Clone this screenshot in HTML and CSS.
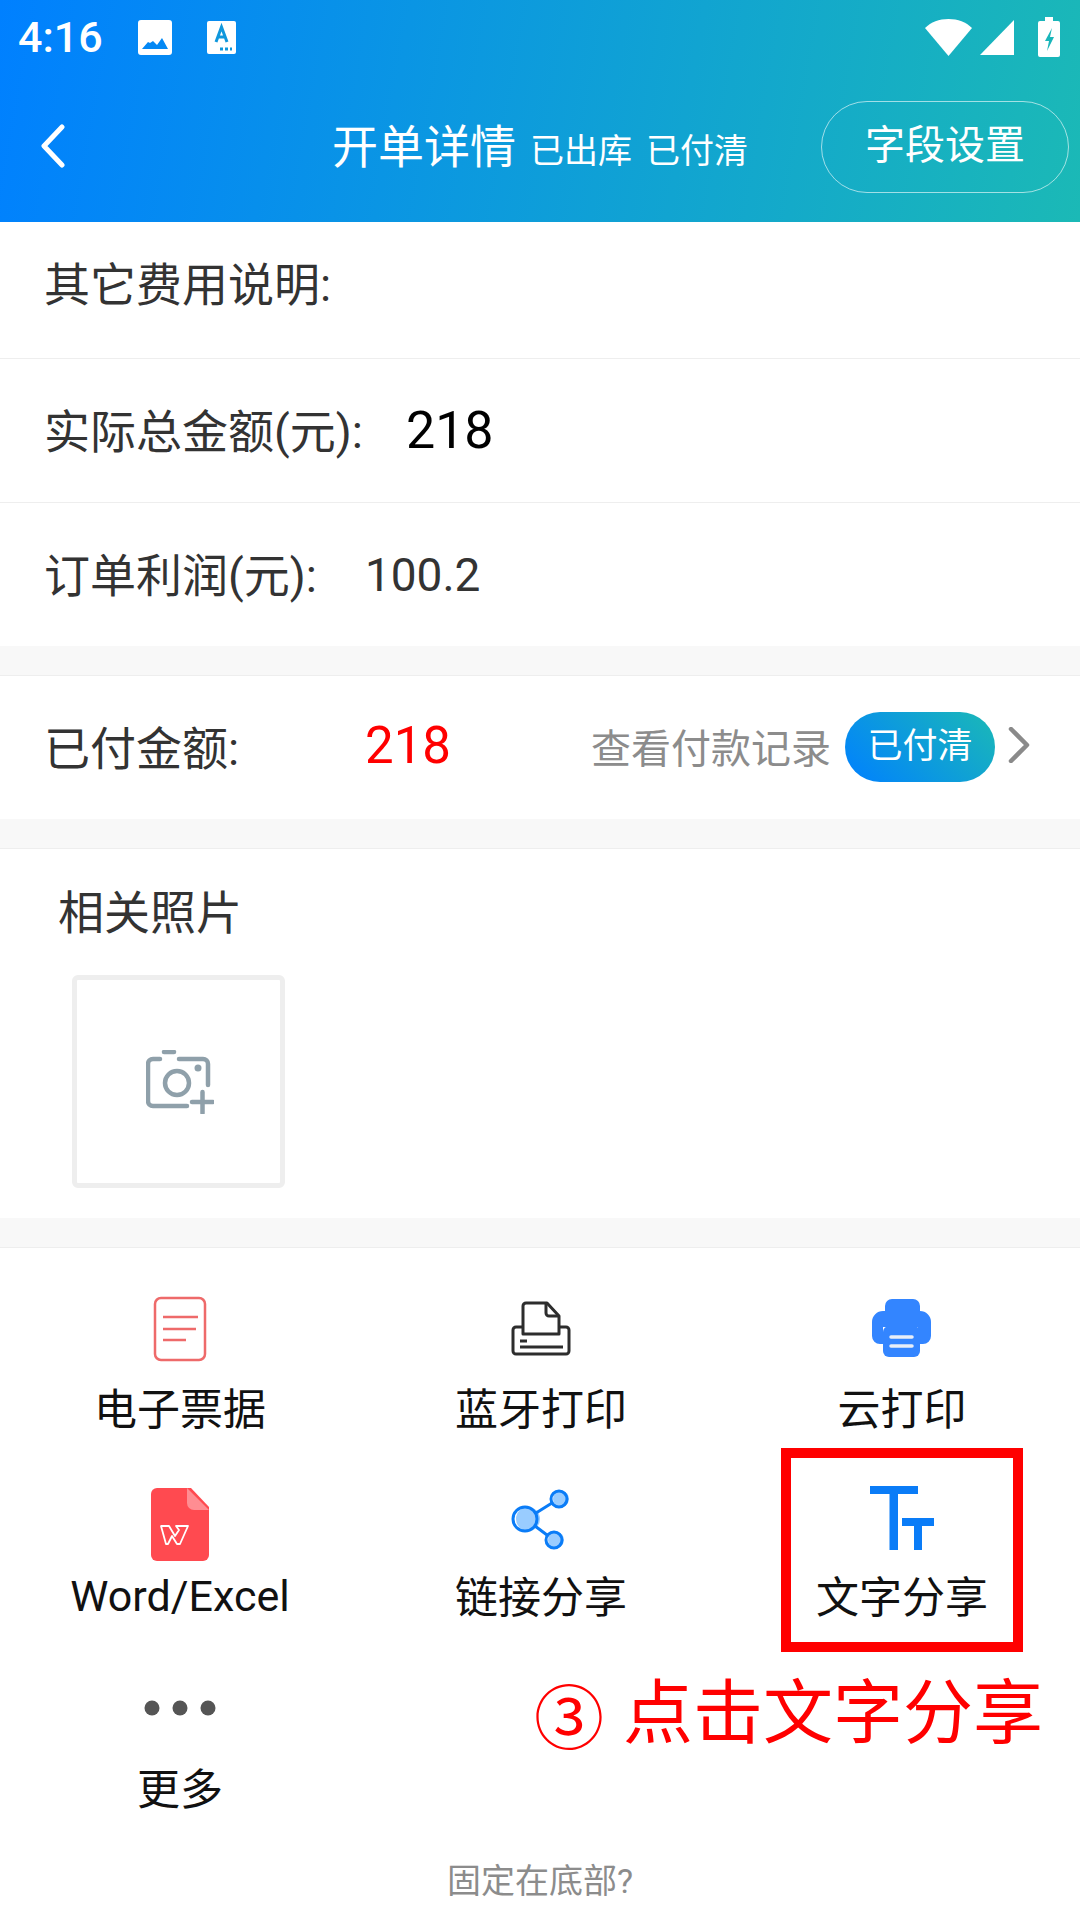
FILE: index.html
```html
<!DOCTYPE html>
<html lang="zh">
<head>
  <meta charset="UTF-8">
  <meta name="viewport" content="width=device-width, initial-scale=1.0">
  <title>开单详情</title>
  <link rel="stylesheet" href="styles.css">
</head>
<body>
  <div id="page">
    <header class="top">
      <div class="status">
        <span class="time">4:16</span>
        <svg class="st-pic" width="34" height="35" viewBox="0 0 34 35"><path fill="#fff" fill-rule="evenodd" d="M3 0h28a3 3 0 0 1 3 3v29a3 3 0 0 1-3 3H3a3 3 0 0 1-3-3V3a3 3 0 0 1 3-3zM4 29h26l-6-11-5 7-4-4-3 2-2-1z"/></svg>
        <svg class="st-a" width="29" height="33" viewBox="0 0 29 33"><path fill="#fff" d="M2 0h25a2 2 0 0 1 2 2v29a2 2 0 0 1-2 2H2a2 2 0 0 1-2-2V2a2 2 0 0 1 2-2z"/><path fill="none" stroke="#0f97dc" stroke-width="3" d="M9 21l5.500-15 5.500 15M11 16h7"/><path stroke="#0f97dc" stroke-width="3" stroke-dasharray="3 2" d="M13 28h12"/></svg>
        <span class="status-right">
          <svg width="47" height="37" viewBox="0 0 47 37"><path fill="#fff" d="M0 9C6 3 14 0 23.500 0S41 3 47 9L23.500 37z"/></svg>
          <svg width="34" height="35" viewBox="0 0 34 35"><path fill="#fff" d="M34 0v35H0z"/></svg>
          <svg width="22" height="40" viewBox="0 0 22 40"><path fill="#fff" fill-rule="evenodd" d="M7 0h8v4h5a2 2 0 0 1 2 2v32a2 2 0 0 1-2 2H2a2 2 0 0 1-2-2V6a2 2 0 0 1 2-2h5zM14 11l-7 13h4l-2 10 7-14h-4z"/></svg>
        </span>
      </div>
      <nav class="nav">
        <svg class="back" width="26" height="44" viewBox="0 0 26 44"><path fill="none" stroke="#fff" stroke-width="5" stroke-linecap="round" stroke-linejoin="round" d="M22 3L4 22l18 19"/></svg>
        <div class="nav-title">
          <span class="title-main">开单详情</span>
          <span class="title-sub">已出库</span>
          <span class="title-sub">已付清</span>
        </div>
        <div class="field-btn">字段设置</div>
      </nav>
    </header>

    <section class="rows">
      <div class="row row-first"><span class="lbl">其它费用说明:</span></div>
      <div class="row"><span class="lbl">实际总金额(元):</span><span class="val-total">218</span></div>
      <div class="row row-last"><span class="lbl">订单利润(元):</span><span class="val-profit">100.2</span></div>
    </section>

    <div class="gap"></div>

    <section class="row row-pay">
      <span class="lbl lbl-pay">已付金额:</span>
      <span class="val-paid">218</span>
      <span class="pay-right">
        <span class="pay-link">查看付款记录</span>
        <span class="pill">已付清</span>
        <svg class="pay-arrow" width="22" height="36" viewBox="0 0 22 36"><path fill="none" stroke="#8a8a8a" stroke-width="4.500" stroke-linecap="round" stroke-linejoin="round" d="M3 2l16 16L3 34"/></svg>
      </span>
    </section>

    <div class="gap"></div>

    <section class="photos">
      <div class="photos-title">相关照片</div>
      <div class="photo-box">
        <svg width="68" height="64" viewBox="0 0 68 64"><g fill="none" stroke="#8fa0aa" stroke-width="4.500" stroke-linecap="round"><path d="M18 2h10"/><path d="M14 9H7a5 5 0 0 0-5 5v37a5 5 0 0 0 5 5h34"/><path d="M33 9h24a5 5 0 0 1 5 5v21"/><circle cx="31" cy="33" r="12"/><path d="M46 52h21M56.500 42v21"/></g><circle cx="52" cy="18" r="3.500" fill="#8fa0aa"/></svg>
      </div>
    </section>

    <div class="gap"></div>

    <section class="tools">
      <div class="tool">
        <div class="tool-icon">
          <svg width="54" height="80" viewBox="0 0 54 80"><rect x="2" y="9" width="50" height="62" rx="6" fill="none" stroke="#ee6a6a" stroke-width="2.500"/><path fill="none" stroke="#ee6a6a" stroke-width="2.500" d="M10 28h35M10 40h33M10 51h23"/></svg>
        </div>
        <div class="tool-name">电子票据</div>
      </div>
      <div class="tool">
        <div class="tool-icon">
          <svg width="60" height="80" viewBox="0 0 60 80"><g fill="none" stroke="#2d2d2d" stroke-width="3" stroke-linejoin="round"><path d="M12 38H5a3 3 0 0 0-3 3v21a3 3 0 0 0 3 3h50a3 3 0 0 0 3-3V41a3 3 0 0 0-3-3h-7"/><path d="M12 45V17a3 3 0 0 1 3-3h21l12 13v18z"/><path d="M35 14v10a3 3 0 0 0 3 3h10"/><path d="M9 52h7M9 58h43"/></g></svg>
        </div>
        <div class="tool-name">蓝牙打印</div>
      </div>
      <div class="tool">
        <div class="tool-icon">
          <svg width="60" height="80" viewBox="0 0 60 80"><path fill="#3385ff" d="M13 22v-5a7 7 0 0 1 7-7h21a7 7 0 0 1 7 7v5a11 11 0 0 1 11 11v14a8 8 0 0 1-8 8h-5V38H11v17H8a8 8 0 0 1-8-8V33a11 11 0 0 1 11-11z"/><rect x="11" y="37" width="37" height="31" rx="6" fill="#3385ff"/><path stroke="#e8eef8" stroke-width="3.500" stroke-linecap="round" d="M19 48h21M19 57h21"/></svg>
        </div>
        <div class="tool-name">云打印</div>
      </div>

      <div class="tool tool-tight">
        <div class="tool-icon">
          <svg width="58" height="80" viewBox="0 0 58 80"><path fill="#ff4a50" d="M7 6h33l18 19v48a6 6 0 0 1-6 6H6a6 6 0 0 1-6-6V12a6 6 0 0 1 6-6z"/><path fill="#ff8d92" d="M36 6l22 22H43a7 7 0 0 1-7-7z"/><path fill="none" stroke="#fff" stroke-width="1.800" stroke-linejoin="round" d="M10 44h8l6 10 4-6-3-4h12l-8 18h-3l-5-8-4 8h-2z"/></svg>
        </div>
        <div class="tool-name tool-name-latin">Word/Excel</div>
      </div>
      <div class="tool tool-tight">
        <div class="tool-icon">
          <svg width="60" height="80" viewBox="0 0 60 80"><g fill="#99ccff"><circle cx="17" cy="37" r="12"/><circle cx="50" cy="17" r="8"/><circle cx="45" cy="58" r="8"/></g><g fill="none" stroke="#0a7cf7" stroke-width="3"><circle cx="14" cy="37" r="12"/><circle cx="48" cy="17" r="8"/><circle cx="43" cy="58" r="8"/><path d="M25 31l16-10M24 44l12 9"/></g></svg>
        </div>
        <div class="tool-name">链接分享</div>
      </div>
      <div class="tool tool-tight">
        <div class="tool-icon">
          <svg width="64" height="80" viewBox="0 0 64 80"><g fill="#0a7cf7"><rect x="0" y="4" width="48" height="8"/><rect x="19.500" y="4" width="8.500" height="64"/><rect x="32" y="36" width="32" height="8"/><rect x="44" y="36" width="8" height="32"/></g></svg>
        </div>
        <div class="tool-name">文字分享</div>
      </div>

      <div class="tool tool-more">
        <div class="tool-icon">
          <svg width="72" height="80" viewBox="0 0 72 80"><g fill="#555"><circle cx="8" cy="38" r="7.500"/><circle cx="36" cy="38" r="7.500"/><circle cx="64" cy="38" r="7.500"/></g></svg>
        </div>
        <div class="tool-name">更多</div>
      </div>
    </section>

    <div class="pin">固定在底部?</div>

    <div class="mark-box"></div>
    <div class="mark-text"><span class="mark-num">③</span>点击文字分享</div>
  </div>
</body>
</html>
```

FILE: styles.css
```css
:root {
  --gradient: linear-gradient(100deg, #0080ff 0%, #1bb9b6 100%);
  --linia: #eeeeee;
  --szary: #f8f8f8;
  --tekst: #333333;
}
* { box-sizing: border-box; }
html, body { margin: 0; padding: 0; }
body {
  background: #fff;
  font-family: Roboto, "Noto Sans CJK SC", sans-serif;
  color: var(--tekst);
}
#page {
  position: relative;
  width: 1080px;
  height: 1920px;
  overflow: hidden;
}

/* header */
.top {
  height: 222px;
  background-image: var(--gradient);
  color: #fff;
}
.status {
  display: flex;
  align-items: center;
  height: 74px;
  padding: 0 20px 0 18px;
}
.time { font-size: 43px; font-weight: 500; width: 120px; }
.st-a { margin-left: 35px; }
.status-right {
  margin-left: auto;
  display: flex;
  align-items: center;
  gap: 8px;
}
.status-right svg + svg + svg { margin-left: 16px; }
.nav {
  display: flex;
  align-items: center;
  height: 148px;
  padding-left: 40px;
}
.back { flex: none; margin-bottom: 4px; }
.nav-title {
  display: flex;
  align-items: baseline;
  margin: 0 0 10px 266px;
  gap: 14px;
}
.title-main { font-size: 46px; }
.title-sub { font-size: 34px; }
.field-btn {
  margin: 0 11px 2px auto;
  width: 248px;
  height: 92px;
  line-height: 88px;
  border: 1.500px solid rgba(255, 255, 255, .6);
  border-radius: 46px;
  text-align: center;
  font-size: 40px;
}

/* rows */
.row {
  display: flex;
  align-items: center;
  height: 144px;
  padding-left: 44px;
  border-bottom: 1px solid var(--linia);
  font-size: 46px;
}
.row-first { height: 137px; padding-bottom: 12px; }
.row-last { border-bottom: none; height: 143px; }
.lbl { color: var(--tekst); font-size: 46px; margin-bottom: 6px; }
.val-total { margin-left: 43px; font-size: 52px; color: #000; }
.val-profit { margin-left: 48px; color: var(--tekst); }

.gap {
  height: 30px;
  background: var(--szary);
  border-bottom: 1px solid var(--linia);
}

.row-pay { border-bottom: none; height: 143px; }
.lbl-pay { width: 321px; }
.val-paid { font-size: 51px; color: #ff0000; margin-bottom: 4px; }
.pay-right {
  margin-left: auto;
  padding-right: 50px;
  display: flex;
  align-items: center;
}
.pay-link { font-size: 40px; color: #8c8c8c; margin-bottom: 4px; }
.pill {
  margin: 0 13px 2px 14px;
  width: 150px;
  height: 70px;
  line-height: 70px;
  border-radius: 35px;
  background-image: linear-gradient(45deg, #0080ff 0%, #1bb9b6 100%);
  color: #fff;
  text-align: center;
  font-size: 35px;
}
.pay-arrow { margin-bottom: 6px; }

/* photos */
.photos {
  height: 369px;
  padding: 34px 0 0 58px;
}
.photos-title { font-size: 46px; line-height: 60px; }
.photo-box {
  display: flex;
  align-items: center;
  justify-content: center;
  width: 213px;
  height: 213px;
  margin: 32px 0 0 14px;
  border: 5px solid var(--linia);
  border-radius: 6px;
}
.photo-box svg { margin-left: 2px; }

/* share tools */
.tools {
  display: grid;
  width: 1082px;
  grid-template-columns: 360px 362px 360px;
  row-gap: 47px;
  padding-top: 41px;
}
.tool {
  display: flex;
  flex-direction: column;
  align-items: center;
  gap: 16px;
}
.tool-tight { gap: 11px; }
.tool-more { gap: 15px; }
.tool-icon {
  display: flex;
  align-items: center;
  justify-content: center;
  height: 80px;
}
.tool-name {
  font-size: 43px;
  line-height: 50px;
  color: #111;
}
.tool-name-latin { margin-top: -2px; }
.pin {
  margin-top: 41px;
  text-align: center;
  font-size: 34px;
  line-height: 50px;
  color: #8c8c8c;
}

/* red marks on top of the screenshot */
.mark-box {
  position: absolute;
  left: 781px;
  top: 1448px;
  width: 242px;
  height: 204px;
  border: 10px solid #ff0000;
}
.mark-text {
  position: absolute;
  left: 534px;
  top: 1660px;
  display: flex;
  align-items: center;
  font-size: 70px;
  line-height: 96px;
  color: #ff0000;
  white-space: nowrap;
}
.mark-num { width: 89px; margin-top: 12px; }
```
